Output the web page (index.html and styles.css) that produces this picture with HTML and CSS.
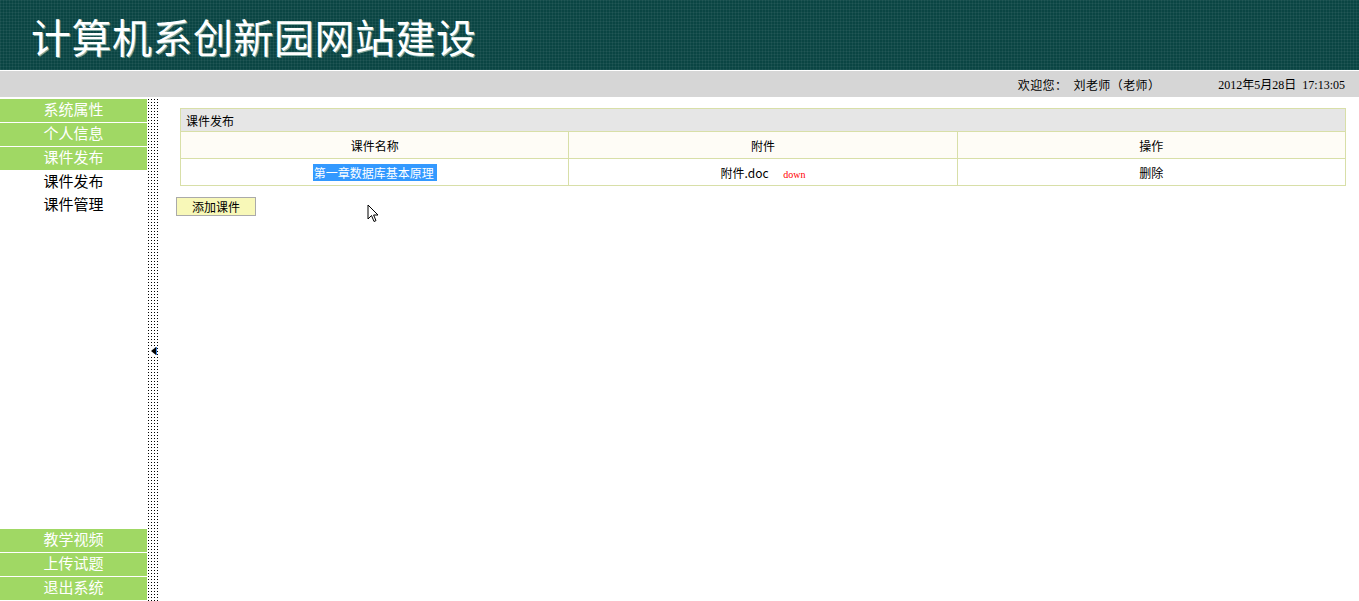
FILE: index.html
```html
<!DOCTYPE html>
<html lang="zh-CN">
<head>
  <meta charset="UTF-8" />
  <title>计算机系创新园网站建设</title>
  <link rel="stylesheet" href="styles.css">
</head>
<body>

  <div class="header">
    <h1>计算机系创新园网站建设</h1>
  </div>

  <div class="topbar">
    <span class="welcome">欢迎您：&nbsp;&nbsp;刘老师（老师）</span>
    <span class="clock">2012年5月28日&nbsp;&nbsp;17:13:05</span>
  </div>

  <div class="main">
    <div class="sidebar">
      <div class="menu-top">
        <div class="menu-item">系统属性</div>
        <div class="menu-item">个人信息</div>
        <div class="menu-item">课件发布</div>
        <div class="sub-item">课件发布</div>
        <div class="sub-item">课件管理</div>
      </div>
      <div class="menu-bottom">
        <div class="menu-item">教学视频</div>
        <div class="menu-item">上传试题</div>
        <div class="menu-item">退出系统</div>
      </div>
    </div>

    <div class="splitter">
      <span class="collapse-arrow"></span>
    </div>

    <div class="content">
      <table class="list">
        <tr class="caption">
          <td colspan="3">课件发布</td>
        </tr>
        <tr class="head">
          <td>课件名称</td>
          <td>附件</td>
          <td>操作</td>
        </tr>
        <tr class="row">
          <td><span class="selected">第一章数据库基本原理&nbsp;</span></td>
          <td>附件.doc <a class="down">down</a></td>
          <td>删除</td>
        </tr>
      </table>
      <button class="add-btn">添加课件</button>

      <svg class="cursor" width="13" height="20" viewBox="0 0 13 20">
        <path d="M1 1 L1 15 L4.5 11.5 L7 17.5 L9 16.6 L6.6 11 L11 11 Z" fill="#fff" stroke="#000" stroke-width="1"/>
      </svg>
    </div>
  </div>

</body>
</html>
```

FILE: styles.css
```css
body {
  margin: 0;
  padding: 0;
  font-family: "Noto Sans CJK SC", "Liberation Sans", sans-serif;
  color: #000;
  background: #fff;
  overflow: hidden;
}

.header {
  height: 70px;
  background-color: #0a4543;
  background-image:
    repeating-linear-gradient(0deg, rgba(255,255,255,0.05) 0 1px, transparent 1px 3px),
    repeating-linear-gradient(90deg, rgba(255,255,255,0.05) 0 1px, transparent 1px 3px);
  padding-left: 31px;
}

.header h1 {
  margin: 0;
  font-family: "Liberation Serif", "Noto Sans CJK SC", serif;
  font-weight: normal;
  font-size: 40px;
  line-height: 80px;
  height: 70px;
  color: #fff;
  text-shadow: 1px 1px 0 #7fa8a0;
  letter-spacing: 0.5px;
}

.topbar {
  border-top: 1px solid #fff;
  border-bottom: 1px solid #fff;
  height: 26px;
  background: #d6d6d6;
  display: flex;
  justify-content: flex-end;
  align-items: center;
  font-size: 12px;
  padding-right: 14px;
}

.welcome {
  margin-right: 58px;
  letter-spacing: 0.4px;
}

.clock {
  font-family: "Liberation Serif", "Noto Sans CJK SC", serif;
}

.main {
  display: flex;
  height: 503px;
  position: relative;
}

.sidebar {
  width: 147px;
  display: flex;
  flex-direction: column;
  justify-content: space-between;
  padding-top: 1px;
  padding-bottom: 1px;
  box-sizing: border-box;
}

.menu-item {
  height: 23px;
  line-height: 20px;
  margin-bottom: 1px;
  background: #a0d864;
  color: #fff;
  text-align: center;
  font-size: 15px;
}

.menu-bottom .menu-item {
  margin-bottom: 0;
  margin-top: 1px;
}

.sub-item {
  height: 23px;
  line-height: 19px;
  text-align: center;
  font-size: 15px;
}

.splitter {
  width: 13px;
  background-image: radial-gradient(circle, #000 0.7px, transparent 0.8px);
  background-size: 3px 3px;
  background-position: 0 0;
  display: flex;
  align-items: center;
  justify-content: center;
}

.collapse-arrow {
  width: 0;
  height: 0;
  border-top: 4px solid transparent;
  border-bottom: 4px solid transparent;
  border-right: 5px solid #000;
  box-shadow: 1px 0 0 #3b7fd6;
  margin-left: -1px;
  margin-top: 2px;
  background: #fff;
}

.content {
  flex: 1;
  padding: 10px 13px 0 16px;
  position: relative;
}

.list {
  width: calc(100% - 4px);
  margin-left: 4px;
  border-collapse: collapse;
  font-size: 12px;
  table-layout: fixed;
}

.list td {
  border: 1px solid #d8dfa8;
  text-align: center;
  height: 26px;
  padding: 0;
}

.caption td {
  background: #e6e6e6;
  text-align: left;
  padding-left: 5px;
  height: 22px;
}

.head td {
  background: #fefcf6;
}

.selected {
  background: #3399ff;
  color: #fff;
  padding-left: 1px;
}

.down {
  color: #ff0000;
  font-family: "Liberation Serif", serif;
  font-size: 10px;
  margin-left: 12px;
}

.add-btn {
  display: block;
  margin-top: 11px;
  width: 80px;
  height: 19px;
  padding: 0;
  background: #f8f8b8;
  border: 1px solid #aaa;
  font-family: "Noto Sans CJK SC", sans-serif;
  font-size: 12px;
  line-height: 16px;
}

.cursor {
  position: absolute;
  left: 207px;
  top: 106px;
}
```
